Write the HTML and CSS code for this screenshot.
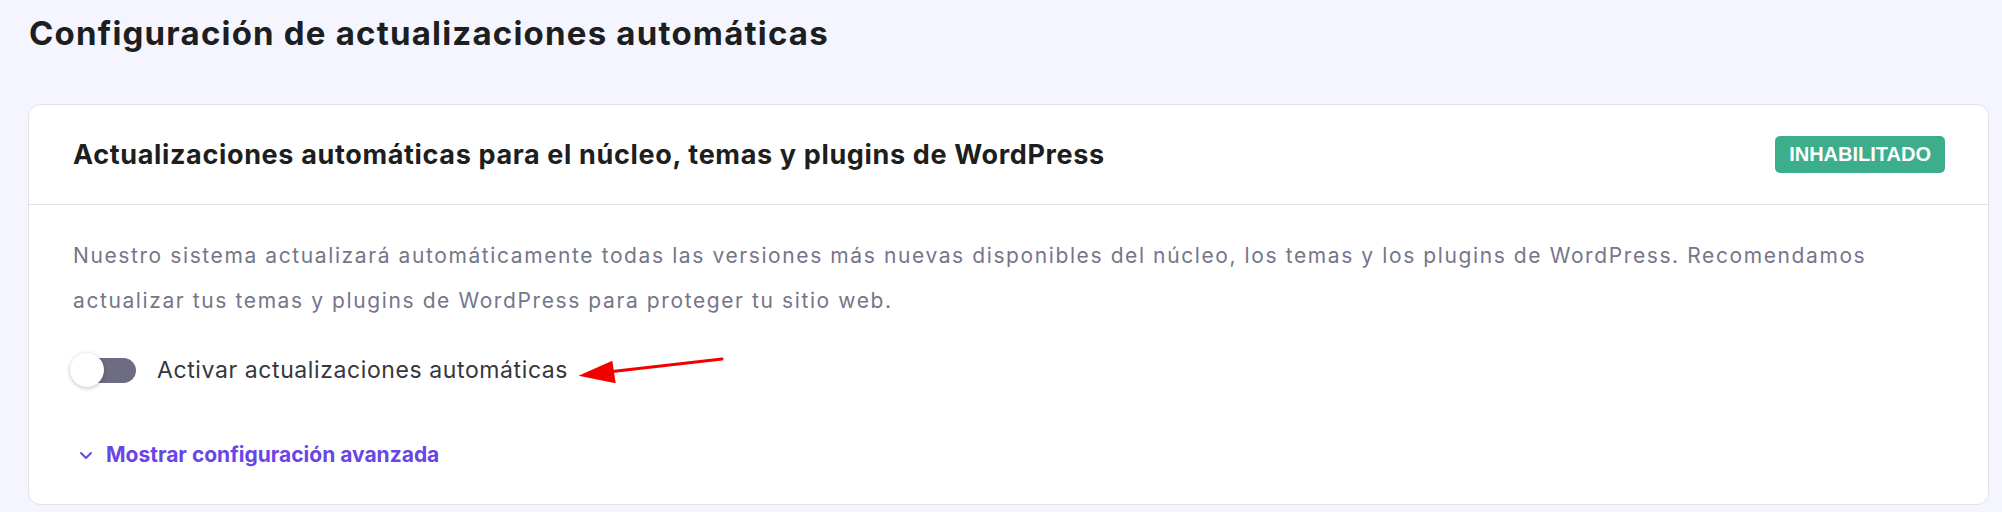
FILE: index.html
```html
<!DOCTYPE html>
<html lang="es">
<head>
    <meta charset="UTF-8">
    <meta name="viewport" content="width=device-width, initial-scale=1.0">
    <title>Configuración de actualizaciones automáticas</title>
    <link rel="stylesheet" href="styles.css">
</head>
<body>
    <main class="page">
        <h1 class="page-title">Configuración de actualizaciones automáticas</h1>

        <section class="card">
            <header class="card-header">
                <h2 class="card-title">Actualizaciones automáticas para el núcleo, temas y plugins de WordPress</h2>
                <span class="badge">INHABILITADO</span>
            </header>

            <div class="card-body">
                <p class="card-text">Nuestro sistema actualizará automáticamente todas las versiones más nuevas disponibles del núcleo, los temas y los plugins de WordPress. Recomendamos actualizar tus temas y plugins de WordPress para proteger tu sitio web.</p>

                <div class="toggle-row">
                    <label class="switch">
                        <input type="checkbox">
                        <span class="track"></span>
                        <span class="knob"></span>
                    </label>
                    <span class="toggle-label">Activar actualizaciones automáticas</span>
                    <!-- flecha de anotación -->
                    <svg class="pointer" width="146" height="28" viewBox="0 0 146 28">
                        <line x1="30" y1="15" x2="144" y2="2" stroke="#f20000" stroke-width="3" stroke-linecap="round"/>
                        <polygon points="0.5,18.7 34.3,3.7 37.7,26.3" fill="#f20000"/>
                    </svg>
                </div>

                <button class="advanced-link" type="button">
                    <svg width="14" height="9" viewBox="0 0 14 9">
                        <polyline points="2,2 7,7 12,2" fill="none" stroke="currentColor" stroke-width="2" stroke-linecap="round" stroke-linejoin="round"/>
                    </svg>
                    Mostrar configuración avanzada
                </button>
            </div>
        </section>
    </main>
</body>
</html>
```

FILE: styles.css
```css
* {
    box-sizing: border-box;
}
body {
    margin: 0;
    background: #f4f5ff;
    font-family: Inter, "Noto Sans", sans-serif;
    color: #1d1e20;
}
.page {
    padding: 13px 13px 0 28px;
}
.page-title {
    margin: 0 0 51px 1px;
    font-size: 33px;
    line-height: 40px;
    font-weight: 700;
    letter-spacing: 1.2px;
}
.card {
    background: #fff;
    border: 1px solid #e2e3ea;
    border-radius: 12px;
}
.card-header {
    display: flex;
    align-items: center;
    justify-content: space-between;
    height: 100px;
    padding: 0 43px 0 44px;
    border-bottom: 1px solid #e2e3ea;
}
.card-title {
    margin: 0;
    font-size: 27px;
    font-weight: 700;
    letter-spacing: 0.65px;
}
.badge {
    height: 37px;
    padding: 0 14px;
    border-radius: 5px;
    background: #3dae8c;
    color: #fff;
    font-family: "Liberation Sans", Arial, sans-serif;
    font-size: 20px;
    font-weight: 700;
    line-height: 37px;
}
.card-body {
    padding: 28px 44px 37px 44px;
}
.card-text {
    margin: 0;
    font-size: 21px;
    line-height: 45px;
    letter-spacing: 1.6px;
    color: #74768a;
}
.toggle-row {
    display: flex;
    align-items: center;
    margin-top: 30px;
}
.switch {
    position: relative;
    width: 66px;
    height: 34px;
    margin-left: -3px;
}
.switch input {
    display: none;
}
.track {
    position: absolute;
    left: 6px;
    right: 0;
    top: 5px;
    height: 25px;
    border-radius: 13px;
    background: #6d6c82;
}
.knob {
    position: absolute;
    left: 0;
    top: 0;
    width: 34px;
    height: 34px;
    border-radius: 50%;
    background: #fff;
    box-shadow: 0 1px 4px rgba(0, 0, 0, 0.25);
}
.toggle-label {
    margin-left: 21px;
    font-size: 23px;
    letter-spacing: 0.6px;
    color: #36363f;
}
.pointer {
    margin-left: 10px;
    margin-top: 2px;
}
.advanced-link {
    display: flex;
    align-items: center;
    gap: 13px;
    margin-top: 56px;
    padding: 0 0 0 6px;
    border: none;
    background: none;
    font-family: inherit;
    font-size: 21px;
    line-height: 24px;
    font-weight: 700;
    color: #6a45e6;
    cursor: pointer;
}
```
